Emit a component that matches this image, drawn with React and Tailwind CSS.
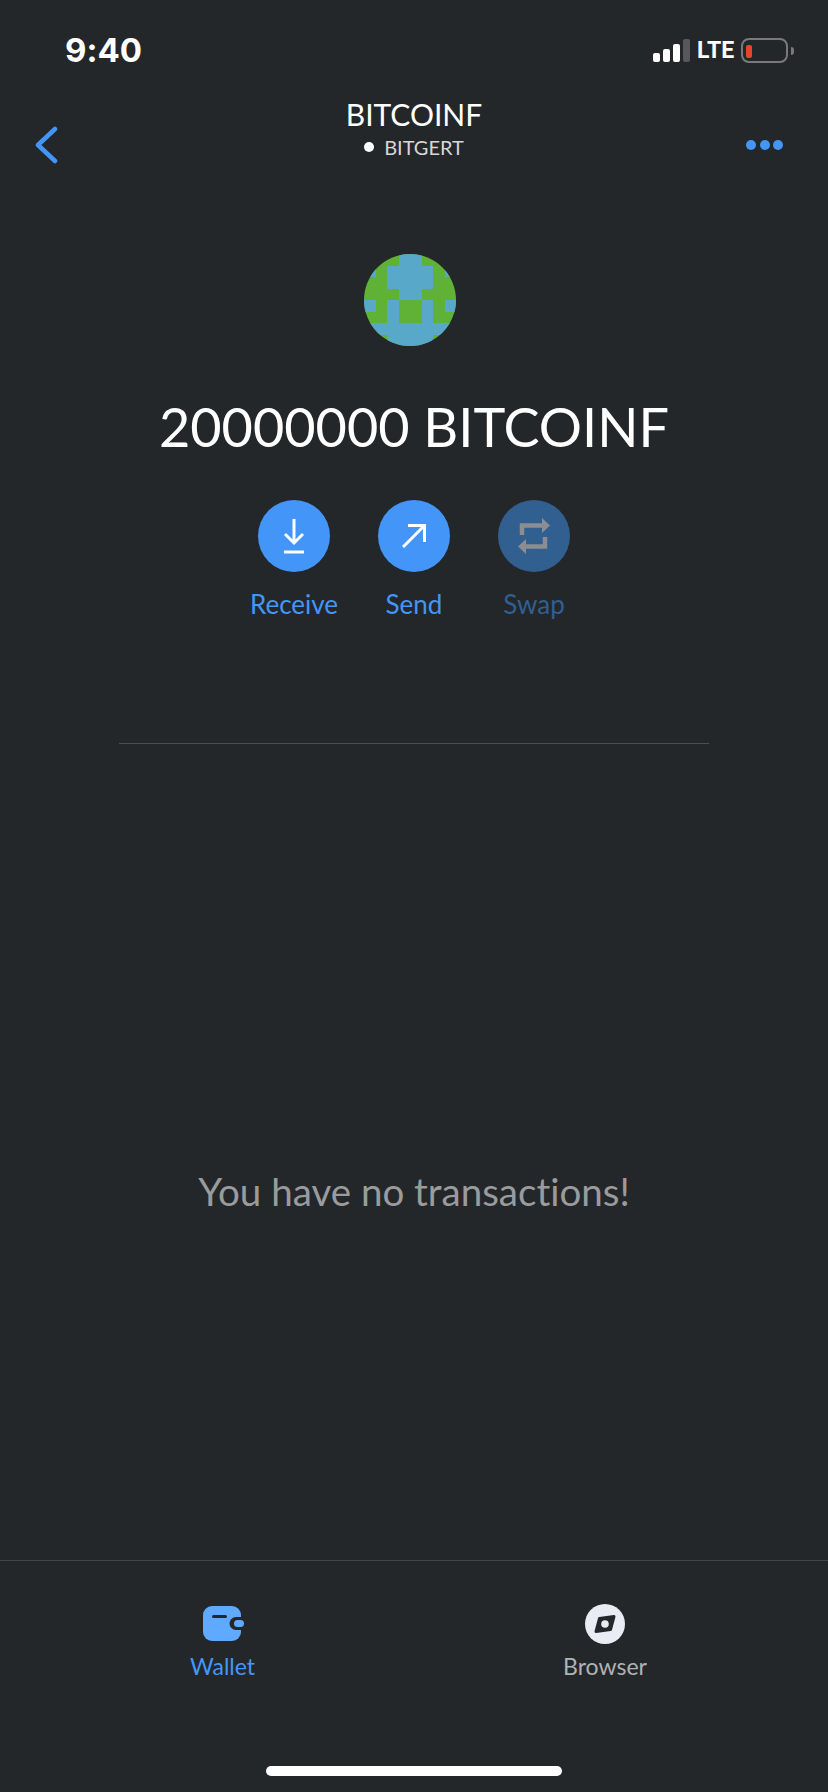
import React from 'react';

const IDENTICON = [
  '00011000',
  '10111101',
  '00111100',
  '00011000',
  '10100101',
  '00100100',
  '11111111',
  '00111100',
];

function Identicon() {
  return (
    <svg width="92" height="92" viewBox="0 0 8 8" shapeRendering="crispEdges" className="rounded-full">
      <rect width="8" height="8" fill="#5fb236" />
      {IDENTICON.map((row, y) =>
        row.split('').map((cell, x) =>
          cell === '1' ? <rect key={x + '-' + y} x={x} y={y} width="1" height="1" fill="#58a8c9" /> : null
        )
      )}
    </svg>
  );
}

function StatusBar() {
  return (
    <div className="h-[96px] flex items-start justify-between pt-[32px] pl-[65px] pr-[34px] shrink-0">
      <span className="text-[33px] leading-[36px] font-bold text-white font-['Inter',sans-serif]">9:40</span>
      <div className="flex items-end pt-[6px]">
        <div className="flex items-end gap-[3px] h-[23px]">
          <div className="w-[7px] h-[9px] rounded-[2px] bg-white"></div>
          <div className="w-[7px] h-[13px] rounded-[2px] bg-white"></div>
          <div className="w-[7px] h-[18px] rounded-[2px] bg-white"></div>
          <div className="w-[7px] h-[23px] rounded-[2px] bg-[#56585a]"></div>
        </div>
        <span className="ml-[7px] w-[36px] text-[23px] leading-[22px] font-bold text-white font-['Roboto',sans-serif]">LTE</span>
        <div className="ml-[8px] w-[47px] h-[25px] mb-[-1px] border-2 border-[#77797b] rounded-[8px] p-[3px] pt-[5px]">
          <div className="w-[6px] h-[13px] rounded-[2px] bg-[#e8432e]"></div>
        </div>
        <div className="ml-[3px] mb-[7px] w-[3px] h-[8px] rounded-r-full bg-[#77797b]"></div>
      </div>
    </div>
  );
}

function Header() {
  return (
    <div className="h-[84px] flex items-start justify-between pl-[34px] pr-[45px] shrink-0">
      <div className="w-[60px]">
        <svg width="24" height="38" viewBox="0 0 24 38" fill="none" className="mt-[30px]">
          <path d="M21 3 L4 19 L21 35" stroke="#4396f7" strokeWidth="4.5" strokeLinecap="round" strokeLinejoin="round" />
        </svg>
      </div>
      <div className="flex flex-col items-center pt-[1px] ml-[11px]">
        <span className="text-[30px] leading-[34px] text-white">BITCOINF</span>
        <div className="flex items-center mt-[3px]">
          <div className="w-[10px] h-[10px] rounded-full bg-white mr-[10px]"></div>
          <span className="text-[20px] leading-[26px] text-[#d6d7d8]">BITGERT</span>
        </div>
      </div>
      <div className="w-[60px] flex justify-end gap-[3.5px] mt-[44px]">
        <div className="w-[10px] h-[10px] rounded-full bg-[#4396f7]"></div>
        <div className="w-[10px] h-[10px] rounded-full bg-[#4396f7]"></div>
        <div className="w-[10px] h-[10px] rounded-full bg-[#4396f7]"></div>
      </div>
    </div>
  );
}

function ActionButton({ label, dim, children }) {
  return (
    <div className="w-[72px] flex flex-col items-center">
      <div className={dim ? 'w-[72px] h-[72px] rounded-full bg-[#305f90] flex items-center justify-center' : 'w-[72px] h-[72px] rounded-full bg-[#4396f7] flex items-center justify-center'}>
        {children}
      </div>
      <span className={dim ? 'mt-[16px] text-[26px] leading-[32px] text-[#305f90]' : 'mt-[16px] text-[26px] leading-[32px] text-[#4396f7]'}>{label}</span>
    </div>
  );
}

function Actions() {
  return (
    <div className="flex justify-center gap-[48px] mt-[41px]">
      <ActionButton label="Receive">
        <svg width="20" height="35" viewBox="0 0 20 35" fill="none" stroke="#fff" strokeWidth="3">
          <path d="M10 0 V24" />
          <path d="M1 15 L10 24 L19 15" />
          <path d="M0 33 H20" />
        </svg>
      </ActionButton>
      <ActionButton label="Send">
        <svg width="24" height="24" viewBox="0 0 24 24" fill="none" stroke="#fff" strokeWidth="3">
          <path d="M1 23 L22 2" />
          <path d="M6 1.5 H22.5 V18" />
        </svg>
      </ActionButton>
      <ActionButton label="Swap" dim>
        <svg width="32" height="36" viewBox="0 0 32 36" fill="none" stroke="#8b8d90" strokeWidth="4.5">
          <path d="M4 17 V7.5 H26" />
          <path d="M27 19 V28.5 H6" />
          <path d="M24 0 L32 7.5 L24 15 Z" fill="#8b8d90" stroke="none" />
          <path d="M8 21 L0 28.5 L8 36 Z" fill="#8b8d90" stroke="none" />
        </svg>
      </ActionButton>
    </div>
  );
}

function TabBar() {
  return (
    <div className="h-[232px] border-t border-[#414447] shrink-0 flex flex-col">
      <div className="flex">
        <div className="w-[445px] flex flex-col items-center pt-[45px]">
          <svg width="41" height="35" viewBox="0 0 41 35" className="ml-[2px]">
            <rect x="0" y="0" width="38" height="35" rx="9" fill="#5fa9ff" />
            <rect x="9" y="9" width="15" height="3" rx="1.5" fill="#24272a" />
            <path d="M41 11 H33 A6.5 6.5 0 0 0 33 24 H41 Z" fill="#24272a" />
            <rect x="31" y="14" width="10" height="7" rx="3.5" fill="#5fa9ff" />
          </svg>
          <span className="mt-[10px] text-[23px] leading-[30px] text-[#4396f7]">Wallet</span>
        </div>
        <div className="w-[320px] flex flex-col items-center pt-[43px]">
          <svg width="40" height="40" viewBox="0 0 40 40">
            <circle cx="20" cy="20" r="20" fill="#e9edf3" />
            <path d="M29 12.5 L14.5 14.5 L11 27.5 L25.5 25.5 Z" fill="#24272a" stroke="#24272a" strokeWidth="3" strokeLinejoin="round" />
            <circle cx="20" cy="20" r="3.8" fill="#e9edf3" />
          </svg>
          <span className="mt-[7px] text-[23px] leading-[30px] text-[#b0b2b4]">Browser</span>
        </div>
      </div>
      <div className="mt-auto mb-[16px] mx-auto w-[296px] h-[10px] rounded-full bg-white"></div>
    </div>
  );
}

export default function App() {
  return (
    <div className="w-[828px] h-[1792px] bg-[#24272a] flex flex-col overflow-hidden font-['Lato',sans-serif] [font-variant-ligatures:none]">
      <StatusBar />
      <Header />
      <div className="flex-1 flex flex-col items-center">
        <div className="mt-[74px] h-[92px] mr-[8px]">
          <Identicon />
        </div>
        <h1 className="mt-[49px] text-[54px] leading-[64px] font-normal text-white">20000000 BITCOINF</h1>
        <Actions />
        <div className="mt-[123px] w-[590px] border-t border-[#4c4f52]"></div>
        <div className="flex-1 flex items-center justify-center w-full pt-[77px]">
          <p className="text-[38.5px] leading-[44px] text-[#9a9b9d]">You have no transactions!</p>
        </div>
      </div>
      <TabBar />
    </div>
  );
}
